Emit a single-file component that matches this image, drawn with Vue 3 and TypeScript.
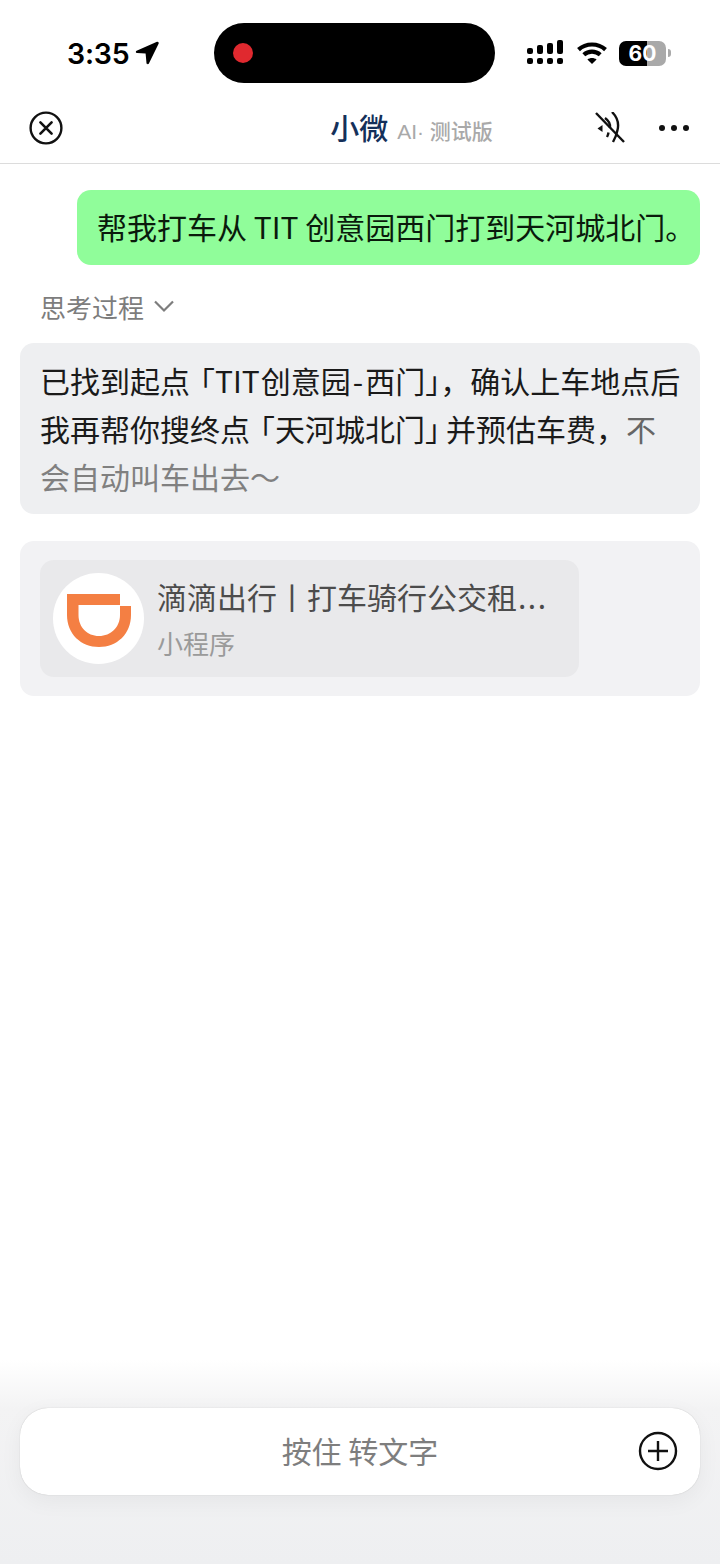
<script setup lang="ts">
// 卡片标题（省略号单独放，字距要宽一点）
const cardTitle = '滴滴出行丨打车骑行公交租'
</script>

<template>
  <div class="page">
    <div class="status">
      <div class="status-left">
        <span class="time">3:35</span>
        <svg class="arrow" width="24" height="24" viewBox="0 0 24 24">
          <path d="M22 .8 1.600 9.700C.4 10.300.7 12 2 12.100l8.600.5.9 9.400c.1 1.400 1.900 1.600 2.400.4L23.700 2.400c.3-1-.7-2-1.700-1.600Z" fill="#000" />
        </svg>
      </div>
      <div class="island"><span class="rec"></span></div>
      <div class="status-right">
        <svg class="signal" width="36" height="24" viewBox="0 0 36 24" fill="#000">
          <rect x="0" y="8" width="6" height="6" rx="2" />
          <rect x="10" y="5" width="6" height="9" rx="2" />
          <rect x="20" y="3" width="6" height="11" rx="2" />
          <rect x="30" y="0" width="6" height="14" rx="2" />
          <rect x="0" y="18" width="6" height="6" rx="2" />
          <rect x="10" y="18" width="6" height="6" rx="2" />
          <rect x="20" y="18" width="6" height="6" rx="2" />
          <rect x="30" y="18" width="6" height="6" rx="2" />
        </svg>
        <svg class="wifi" width="32" height="24" viewBox="0 0 32 24" fill="none" stroke="#000" stroke-width="4.200">
          <path d="M2.500 8.600C10 1.800 22 1.800 29.500 8.600" />
          <path d="M7.800 13.800c4.600-4.200 11.800-4.200 16.400 0" />
          <path d="M16 23 11.400 18.400c2.600-2 6.600-2 9.200 0Z" fill="#000" stroke="none" />
        </svg>
        <div class="battery">
          <div class="battery-body"><span>60</span></div>
          <span class="battery-tip"></span>
        </div>
      </div>
    </div>

    <div class="nav">
      <svg class="close" width="34" height="34" viewBox="0 0 34 34" fill="none" stroke="#111" stroke-width="2.400" stroke-linecap="round">
        <circle cx="17" cy="17" r="15.400" />
        <path d="M11.400 11.400 22.600 22.600M22.600 11.400 11.400 22.600" stroke-width="2.600" />
      </svg>
      <div class="nav-title">
        <span class="name">小微</span>
        <span class="tag">AI· 测试版</span>
      </div>
      <div class="nav-actions">
        <svg width="32" height="32" viewBox="0 0 32 32" fill="none" stroke="#111" stroke-width="2.400">
          <path d="M2 1 30 30" />
          <path d="M18 0c5 5 7 12 5.500 18-.8 4.500-2.500 8.500-4.500 12" />
          <path d="M11 6c3.500 2.500 5.500 6.500 5 10" />
          <path d="M14.500 20.500c-.3 1.800-.8 3.300-1.500 4.500" />
          <path d="M3.500 16.500 8.500 13V20Z" fill="#111" stroke="none" />
        </svg>
        <div class="dots"><i></i><i></i><i></i></div>
      </div>
    </div>

    <div class="messages">
      <div class="bubble-me">帮我打车从 TIT 创意园西门打到天河城北门。</div>

      <div class="thinking">
        <span>思考过程</span>
        <svg width="22" height="14" viewBox="0 0 22 14" fill="none" stroke="#7d7d7d" stroke-width="2.200">
          <path d="M2 2.500 11 11.500 20 2.500" />
        </svg>
      </div>

      <div class="reply">
        <div class="reply-line">已找到起点<span class="lb">「</span><span class="lat">TIT</span>创意园<span class="dash">-</span>西门」，确认上车地点后</div>
        <div class="reply-line">我再帮你搜终点<span class="lb">「</span>天河城北门<span class="rb">」</span>并预估车费，<span class="fade1">不</span></div>
        <div class="reply-line fade2">会自动叫车出去～</div>
      </div>

      <div class="card-wrap">
        <div class="card">
          <div class="logo">
            <svg class="logo-mark" width="64" height="53" viewBox="0 0 64 53">
              <path fill-rule="evenodd" d="M0 0H53V12H64V21C64 40 50 53 32 53C14 53 0 40 0 21ZM11.500 11V21C11.500 33 20 42 32 42C44 42 53 33 53 21V11Z" fill="#f47f43" />
            </svg>
          </div>
          <div class="card-text">
            <div class="card-title">{{ cardTitle }}<span class="more">...</span></div>
            <div class="card-sub">小程序</div>
          </div>
        </div>
      </div>
    </div>

    <div class="footer">
      <div class="input">
        <span class="hold">按住 转文字</span>
        <svg class="plus" width="40" height="40" viewBox="0 0 40 40" fill="none" stroke="#111" stroke-width="2.400">
          <circle cx="20" cy="20" r="18" />
          <path d="M20 10V30M10 20H30" />
        </svg>
      </div>
    </div>
  </div>
</template>

<style scoped>
.page {
  position: relative;
  width: 720px;
  height: 1564px;
  display: flex;
  flex-direction: column;
  background: #fff;
  overflow: hidden;
  font-family: "Noto Sans CJK SC", "Liberation Sans", sans-serif;
}

/* 状态栏 */
.status {
  height: 100px;
  flex: none;
  display: flex;
  align-items: flex-start;
  padding-top: 23px;
  box-sizing: border-box;
}
.status-left {
  width: 214px;
  height: 60px;
  box-sizing: border-box;
  padding-left: 67px;
  display: flex;
  align-items: center;
  gap: 6px;
}
.time {
  font-family: Inter, "Liberation Sans", sans-serif;
  font-size: 28.500px;
  font-weight: 600;
  color: #000;
  letter-spacing: -0.2px;
}
.arrow {
  margin-top: -1px;
}
.island {
  width: 281px;
  height: 60px;
  background: #000;
  border-radius: 30px;
  display: flex;
  align-items: center;
  padding-left: 19px;
  box-sizing: border-box;
}
.rec {
  width: 20px;
  height: 20px;
  border-radius: 50%;
  background: #e0292f;
}
.status-right {
  height: 60px;
  padding-left: 32px;
  display: flex;
  align-items: center;
  gap: 13px;
}
.signal {
  margin-bottom: 2px;
}
.wifi {
  margin-right: -1px;
}
.battery {
  display: flex;
  align-items: center;
  gap: 2px;
  margin-left: -1px;
}
.battery-body {
  width: 47px;
  height: 25px;
  border-radius: 7px;
  background: linear-gradient(90deg, #000 0 60%, #a9a9a9 60% 100%);
  color: #fff;
  font-family: Inter, "Liberation Sans", sans-serif;
  font-size: 21px;
  font-weight: 700;
  line-height: 25px;
  text-align: center;
}
.battery-tip {
  width: 3px;
  height: 8px;
  border-radius: 0 3px 3px 0;
  background: #a9a9a9;
}

/* 导航 */
.nav {
  height: 64px;
  flex: none;
  box-sizing: border-box;
  border-bottom: 1px solid #dcdcdc;
  padding: 0 31px 7px 29px;
  display: flex;
  align-items: center;
  justify-content: space-between;
}
.nav-title {
  display: flex;
  align-items: baseline;
  gap: 9px;
  margin-left: 166px;
  margin-bottom: 2px;
}
.name {
  font-size: 29px;
  font-weight: 500;
  color: #14305a;
}
.tag {
  font-family: "Liberation Sans", "Noto Sans CJK SC", sans-serif;
  font-size: 21px;
  font-weight: 500;
  color: #a9a9a9;
  white-space: pre;
  position: relative;
  top: -1px;
}
.nav-actions {
  display: flex;
  align-items: center;
  gap: 33px;
}
.dots {
  display: flex;
  gap: 6px;
}
.dots i {
  width: 6px;
  height: 6px;
  border-radius: 50%;
  background: #111;
}

/* 消息 */
.messages {
  flex: 1;
  padding: 26px 20px 0;
  display: flex;
  flex-direction: column;
  align-items: flex-start;
}
.bubble-me {
  align-self: flex-end;
  width: 623px;
  height: 75px;
  box-sizing: border-box;
  padding-left: 20px;
  background: #90fd9a;
  border-radius: 14px;
  color: #0a1a0c;
  font-size: 30px;
  line-height: 73px;
  white-space: nowrap;
}
.thinking {
  margin-top: 20px;
  margin-bottom: 3px;
  padding-left: 20px;
  height: 42px;
  display: flex;
  align-items: center;
  gap: 9px;
  color: #7d7d7d;
  font-size: 26px;
}
.reply {
  margin-top: 13px;
  width: 680px;
  height: 171px;
  box-sizing: border-box;
  padding: 13px 20px;
  background: #eeeff1;
  border-radius: 14px;
  color: #1a1a1a;
  font-size: 30px;
  line-height: 48px;
}
.reply-line {
  white-space: nowrap;
}
.lb {
  margin-left: -5px;
}
.rb {
  margin-right: -9px;
}
.lat {
  margin-right: 1px;
}
.dash {
  margin: 0 2px;
}
.fade1 {
  color: #666;
}
.fade2 {
  color: #808080;
}
.card-wrap {
  margin-top: 27px;
  width: 680px;
  height: 155px;
  box-sizing: border-box;
  padding: 19px 20px;
  background: #f2f2f4;
  border-radius: 14px;
}
.card {
  width: 539px;
  height: 117px;
  background: #e9e9eb;
  border-radius: 14px;
  display: flex;
  align-items: center;
  padding-left: 13px;
  box-sizing: border-box;
  gap: 13px;
}
.logo {
  width: 91px;
  height: 91px;
  flex: none;
  border-radius: 50%;
  background: #fff;
  display: flex;
  align-items: center;
  justify-content: center;
}
.logo-mark {
  margin-top: 4px;
}
.card-text {
  margin-top: -1px;
}
.card-title {
  font-size: 30px;
  line-height: 42px;
  color: #4c4c4c;
  white-space: nowrap;
}
.more {
  letter-spacing: 1.500px;
  margin-left: 1px;
}
.card-sub {
  margin-top: 8px;
  font-size: 26px;
  line-height: 36px;
  color: #9a9a9a;
}

/* 底部输入 */
.footer {
  flex: none;
  height: 204px;
  box-sizing: border-box;
  padding: 48px 20px 0;
  background: linear-gradient(180deg, #fff 0, #f3f3f4 24%, #eeeff1 100%);
}
.input {
  position: relative;
  height: 87px;
  box-sizing: border-box;
  border-radius: 28px;
  background: #fff;
  box-shadow: 0 0 1px rgba(0, 0, 0, 0.25), 0 6px 22px rgba(0, 0, 0, 0.05);
  display: flex;
  align-items: center;
  justify-content: center;
}
.hold {
  font-size: 30px;
  color: #7e7e7e;
  margin-top: -4px;
}
.plus {
  position: absolute;
  right: 22px;
  top: 23px;
}
</style>
